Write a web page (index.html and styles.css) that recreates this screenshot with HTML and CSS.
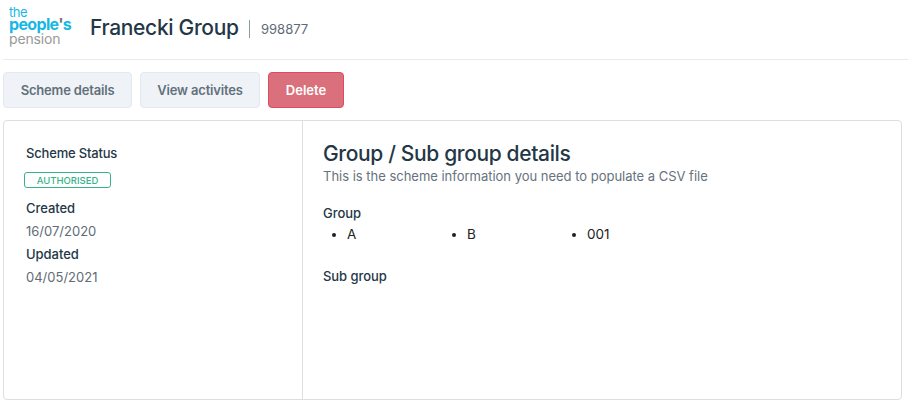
FILE: index.html
```html
<!DOCTYPE html>
<html lang="en">
<head>
<meta charset="utf-8">
<title>Franecki Group</title>
<link rel="stylesheet" href="styles.css">
</head>
<body>
<header class="header">
  <div class="logo"><span class="logo-the">the</span><span class="logo-people">people<span class="logo-mark">'</span>s</span><span class="logo-pension">pension</span></div>
  <h1 class="title">Franecki Group</h1>
  <span class="divider"></span>
  <span class="scheme-id">998877</span>
</header>
<nav class="actions">
  <button class="button">Scheme details</button>
  <button class="button button-view">View activites</button>
  <button class="button button-delete">Delete</button>
</nav>
<main class="card">
  <aside class="summary">
    <h3 class="label label-status">Scheme Status</h3>
    <span class="badge">AUTHORISED</span>
    <h3 class="label">Created</h3>
    <p class="value">16/07/2020</p>
    <h3 class="label">Updated</h3>
    <p class="value">04/05/2021</p>
  </aside>
  <section class="details">
    <h2 class="heading">Group / Sub group details</h2>
    <p class="intro">This is the scheme information you need to populate a CSV file</p>
    <h3 class="label">Group</h3>
    <ul class="groups"><li>A</li><li>B</li><li>001</li></ul>
    <h3 class="label">Sub group</h3>
  </section>
</main>
</body>
</html>
```
FILE: styles.css
```css
* { box-sizing: border-box; }
body, h1, h2, h3, p, ul { margin: 0; padding: 0; }
body { height: 404px; background: #fff; color: #243746; font: 14px/23px Inter, sans-serif; overflow: hidden; }
h1, h2, h3 { font-weight: 500; white-space: nowrap; }
.header { display: flex; height: 60px; margin-left: 3px; border-bottom: 1px solid #e7eaf0; }
.logo { display: flex; flex-direction: column; width: 87px; padding: 6px 0 0 6px; color: #18b8e5; font-family: Inter, sans-serif; font-size: 14px; line-height: 13px; white-space: nowrap; }
.logo span { line-height: 13px; }
.logo-the { height: 12px; font-size: 13px; letter-spacing: -.5px; }
.logo-people { height: 14px; font-size: 16px; font-weight: 700; letter-spacing: -.65px; }
.logo-mark { color: #777; }
.logo-pension { height: 13px; color: #999; letter-spacing: -.15px; }
.title { margin-top: 14px; width: 149px; font-size: 21px; line-height: 28px; letter-spacing: -.33px; }
.divider { width: 1px; height: 18px; margin: 20px 11px 0 10px; background: #8d99a3; }
.scheme-id { margin-top: 18px; color: #5f6b76; font-size: 13px; }
.actions { display: flex; gap: 8px; margin: 12px 0 12px 3px; }
.button { width: 129px; height: 36px; padding: 0; border: 1px solid #e2e9f1; border-radius: 4px; background: #eff3f8; color: #63707a; font: 600 13px/34px Inter, sans-serif; letter-spacing: -.18px; white-space: nowrap; }
.button-view { width: 120px; }
.button-delete { width: 76px; border-color: #df4a5c; background: #d9707c; color: #fff; letter-spacing: 0; }
.card { display: grid; grid-template-columns: 299px 1fr; width: 899px; height: 280px; margin-left: 3px; border: 1px solid #dedede; border-radius: 4px; }
.summary { padding: 21px 0 0 22px; border-right: 1px solid #dedede; }
.label { font-size: 13px; line-height: 23px; letter-spacing: -.05px; }
.label-status { letter-spacing: -.18px; }
.badge { display: block; width: 87px; height: 16px; margin: 7px 0 9px -2px; border: 1px solid #36b58b; border-radius: 3px; color: #36b58b; font-size: 9.5px; font-weight: 500; line-height: 15px; text-align: center; }
.value { color: #5f6b76; font-size: 13px; }
.details { padding: 19px 0 0 20px; }
.heading { font-size: 21px; line-height: 28px; letter-spacing: -.36px; }
.intro { margin: -3px 0 14px; color: #66727d; font-size: 13px; letter-spacing: -.015px; white-space: nowrap; }
.groups { display: grid; grid-template-columns: repeat(3, 120px); margin: -2px 0 19px 24px; color: #222; font-size: 13.5px; }
```
